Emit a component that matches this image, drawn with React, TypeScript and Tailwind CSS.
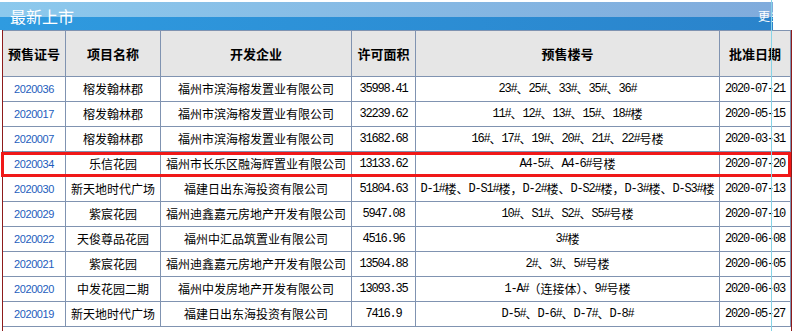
import React from 'react';

interface Permit {
  no: string;
  project: string;
  company: string;
  area: string;
  buildings: string;
  date: string;
}

const permits: Permit[] = [
  { no: '2020036', project: '榕发翰林郡', company: '福州市滨海榕发置业有限公司', area: '35998.41', buildings: '23#、25#、33#、35#、36#', date: '2020-07-21' },
  { no: '2020017', project: '榕发翰林郡', company: '福州市滨海榕发置业有限公司', area: '32239.62', buildings: '11#、12#、13#、15#、18#楼', date: '2020-05-15' },
  { no: '2020007', project: '榕发翰林郡', company: '福州市滨海榕发置业有限公司', area: '31682.68', buildings: '16#、17#、19#、20#、21#、22#号楼', date: '2020-03-31' },
  { no: '2020034', project: '乐信花园', company: '福州市长乐区融海辉置业有限公司', area: '13133.62', buildings: 'A4-5#、A4-6#号楼', date: '2020-07-20' },
  { no: '2020030', project: '新天地时代广场', company: '福建日出东海投资有限公司', area: '51804.63', buildings: 'D-1#楼、D-S1#楼，D-2#楼、D-S2#楼，D-3#楼、D-S3#楼', date: '2020-07-13' },
  { no: '2020029', project: '紫宸花园', company: '福州迪鑫嘉元房地产开发有限公司', area: '5947.08', buildings: '10#、S1#、S2#、S5#号楼', date: '2020-07-10' },
  { no: '2020022', project: '天俊尊品花园', company: '福州中汇品筑置业有限公司', area: '4516.96', buildings: '3#楼', date: '2020-06-08' },
  { no: '2020021', project: '紫宸花园', company: '福州迪鑫嘉元房地产开发有限公司', area: '13504.88', buildings: '2#、3#、5#号楼', date: '2020-06-05' },
  { no: '2020020', project: '中发花园二期', company: '福州中发房地产开发有限公司', area: '13093.35', buildings: '1-A#（连接体）、9#号楼', date: '2020-06-03' },
  { no: '2020019', project: '新天地时代广场', company: '福建日出东海投资有限公司', area: '7416.9', buildings: 'D-5#、D-6#、D-7#、D-8#', date: '2020-05-27' },
];

const headers = ['预售证号', '项目名称', '开发企业', '许可面积', '预售楼号', '批准日期'];

// 半角字符用等宽字体，模拟宋体的 6px 字宽
function Mixed({ text }: { text: string }) {
  const parts = text.split(/([\x20-\x7e]+)/).filter(Boolean);
  return (
    <>
      {parts.map((p, i) =>
        /^[\x20-\x7e]+$/.test(p) ? (
          <span key={i} className="font-['Liberation_Mono',monospace] tracking-[-1.2px]">
            {p}
          </span>
        ) : (
          <span key={i}>{p}</span>
        )
      )}
    </>
  );
}

const cell = 'bg-white flex items-center justify-center whitespace-nowrap text-[12px] text-black';

export default function App() {
  return (
    <div className="relative w-[800px] h-[331px] bg-white overflow-hidden flex flex-col font-['Noto_Sans_CJK_SC',sans-serif]">
      {/* 标题栏 */}
      <div className="relative mt-[2px] w-[773px] h-[28px] overflow-hidden shrink-0">
        <div className="h-[15px] bg-gradient-to-r from-[#8cc9ed] to-[#80abdc]" />
        <div className="h-[13px] bg-gradient-to-r from-[#2f9be0] to-[#2a83cb]" />
        <div className="absolute inset-0 flex items-center justify-between pl-[10px]">
          <span className="text-white text-[16px] leading-none">最新上市</span>
          <span className="text-white text-[12px] leading-none mr-[-9px] w-[24px]">更多</span>
        </div>
      </div>

      {/* 表格 */}
      <div className="flex-1 ml-[2px] w-[790px] border-l border-r border-[#8e1b1b]">
        <div className="grid grid-cols-[62px_94px_190px_63px_303px_70px] grid-rows-[45px_repeat(10,24px)] gap-px bg-[#8093b1] pt-px pb-px pr-px">
          {headers.map((h) => (
            <div key={h} className="bg-[#e6e6e6] flex items-center justify-center text-[13px] font-bold text-black">
              {h}
            </div>
          ))}
          {permits.map((p) => (
            <React.Fragment key={p.no}>
              <div className={cell}>
                <span className="font-['Liberation_Sans',sans-serif] text-[11px] tracking-[-0.4px] text-[#1d5dbd]">{p.no}</span>
              </div>
              <div className={cell}>{p.project}</div>
              <div className={cell}>{p.company}</div>
              <div className={cell}>
                <Mixed text={p.area} />
              </div>
              <div className={cell}>
                <Mixed text={p.buildings} />
              </div>
              <div className={cell}>
                <Mixed text={p.date} />
              </div>
            </React.Fragment>
          ))}
        </div>
      </div>

      {/* 标注框 */}
      <div className="absolute left-[1px] top-[152px] w-[790px] h-[25px] border-[3px] border-[#f01818]" />
      <div className="absolute left-[771px] top-0 w-px h-full bg-[#86d3e6]" />
    </div>
  );
}
